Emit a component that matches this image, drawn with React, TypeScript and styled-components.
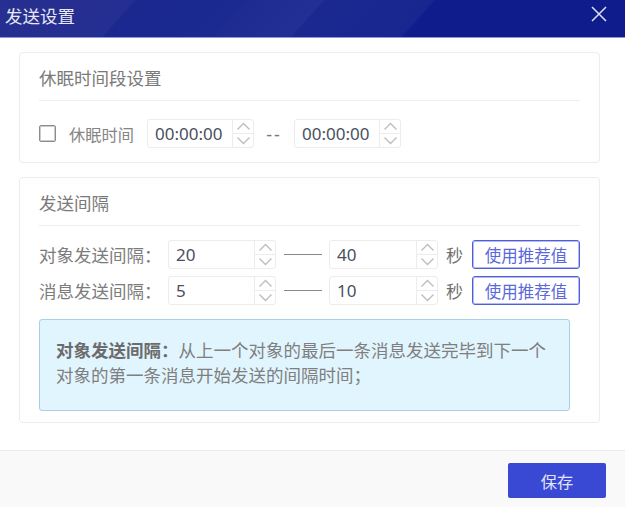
import React from 'react';
import styled, { createGlobalStyle } from 'styled-components';

const GlobalStyle = createGlobalStyle`
  html, body {
    margin: 0;
    padding: 0;
    background: #fff;
  }
  body {
    font-family: "Noto Sans", "Noto Sans CJK SC", sans-serif;
  }
`;

const Chevron: React.FC<{ up?: boolean }> = ({ up }) => (
  <svg width="15" height="9" viewBox="0 0 15 9" fill="none">
    <polyline
      points={up ? '1.5,7.5 7.5,1.5 13.5,7.5' : '1.5,1.5 7.5,7.5 13.5,1.5'}
      stroke="#bdbdbd"
      strokeWidth="1.4"
    />
  </svg>
);

const Spinner: React.FC<{ value: string; width: number }> = ({ value, width }) => (
  <SpinnerBox $width={width}>
    <SpinnerValue>{value}</SpinnerValue>
    <SpinnerSteps>
      <SpinnerStep><Chevron up /></SpinnerStep>
      <SpinnerStep><Chevron /></SpinnerStep>
    </SpinnerSteps>
  </SpinnerBox>
);

const intervals = [
  { label: '对象发送间隔：', from: '20', to: '40' },
  { label: '消息发送间隔：', from: '5', to: '10' },
];

const App: React.FC = () => {
  return (
    <>
      <GlobalStyle />
      <Dialog>
        <Header>
          <HeaderTitle>发送设置</HeaderTitle>
          <CloseIcon width="16" height="16" viewBox="0 0 16 16" fill="none">
            <path d="M1 1 L15 15 M15 1 L1 15" stroke="#dfe1f2" strokeWidth="1.5" />
          </CloseIcon>
        </Header>

        <Body>
          <Card>
            <CardTitle>休眠时间段设置</CardTitle>
            <SleepRow>
              <CheckBox />
              <SleepLabel>休眠时间</SleepLabel>
              <Spinner value="00:00:00" width={107} />
              <SleepDash>--</SleepDash>
              <Spinner value="00:00:00" width={107} />
            </SleepRow>
          </Card>

          <Card>
            <CardTitle>发送间隔</CardTitle>
            <IntervalRows>
              {intervals.map((item) => (
                <IntervalRow key={item.label}>
                  <RowLabel>{item.label}</RowLabel>
                  <Spinner value={item.from} width={108} />
                  <Dash />
                  <Spinner value={item.to} width={109} />
                  <Unit>秒</Unit>
                  <OutlineButton>使用推荐值</OutlineButton>
                </IntervalRow>
              ))}
            </IntervalRows>
            <InfoBox>
              <strong>对象发送间隔：</strong>从上一个对象的最后一条消息发送完毕到下一个对象的第一条消息开始发送的间隔时间；
            </InfoBox>
          </Card>
        </Body>

        <Footer>
          <SaveButton>保存</SaveButton>
        </Footer>
      </Dialog>
    </>
  );
};

const Dialog = styled.div`
  width: 625px;
  height: 507px;
  display: flex;
  flex-direction: column;
  overflow: hidden;
  background: #fff;
`;

const Header = styled.header`
  height: 37px;
  flex-shrink: 0;
  display: flex;
  align-items: center;
  justify-content: space-between;
  padding: 0 18px 0 5px;
  border-bottom: 1px solid #9196d2;
  background: linear-gradient(
    131.7deg,
    #272f90 0,
    #252f91 100px,
    #1a2890 102px,
    #1b2a90 183px,
    #1e2c92 185px,
    #222f94 241px,
    #1a2890 243px,
    #182690 323px,
    #0e1d8b 326px,
    #0e1d8b 100%
  );
`;

const HeaderTitle = styled.h1`
  margin: -6px 0 0;
  font-size: 17.5px;
  font-weight: 400;
  color: #e6e8f4;
`;

const CloseIcon = styled.svg`
  display: block;
  margin-top: -9px;
`;

const Body = styled.main`
  flex: 1;
  display: flex;
  flex-direction: column;
  gap: 14px;
  padding: 14px 25px 0 19px;
`;

const Card = styled.section`
  box-sizing: border-box;
  padding: 0 19px 11px;
  border: 1px solid #ececec;
  border-radius: 4px;
`;

const CardTitle = styled.h2`
  margin: 0;
  height: 48px;
  line-height: 50px;
  box-sizing: border-box;
  border-bottom: 1px solid #eeeeee;
  font-size: 17.5px;
  font-weight: 400;
  color: #7a7a7a;
`;

const SleepRow = styled.div`
  display: flex;
  align-items: center;
  margin: 18px 0 3px;
`;

const CheckBox = styled.span`
  box-sizing: border-box;
  width: 17px;
  height: 17px;
  border: 1px solid #8c8c8c;
  box-shadow: inset 0 0 0 1px rgba(140, 140, 140, 0.45);
  border-radius: 2px;
`;

const SleepLabel = styled.span`
  margin: 0 13px 0 13px;
  font-size: 16.25px;
  color: #858585;
`;

const SleepDash = styled.span`
  width: 40px;
  text-align: center;
  letter-spacing: 2px;
  font-size: 18px;
  color: #777;
`;

const SpinnerBox = styled.div<{ $width: number }>`
  box-sizing: border-box;
  width: ${(p) => p.$width}px;
  height: 29px;
  flex-shrink: 0;
  display: flex;
  border: 1px solid #ececec;
  border-radius: 3px;
  background: #fff;
`;

const SpinnerValue = styled.span`
  flex: 1;
  padding-left: 7px;
  line-height: 28px;
  font-family: "Noto Sans", sans-serif;
  font-size: 17px;
  color: #4a4f60;
`;

const SpinnerSteps = styled.div`
  width: 20px;
  display: flex;
  flex-direction: column;
  border-left: 1px solid #ececec;
`;

const SpinnerStep = styled.span`
  flex: 1;
  display: flex;
  align-items: center;
  justify-content: center;

  & + & {
    border-top: 1px solid #ececec;
  }
`;

const IntervalRows = styled.div`
  display: flex;
  flex-direction: column;
  gap: 7px;
  margin: 14px 0;
`;

const IntervalRow = styled.div`
  display: flex;
  align-items: center;
`;

const RowLabel = styled.span`
  width: 129px;
  flex-shrink: 0;
  font-size: 17.5px;
  white-space: nowrap;
  color: #7c7c7c;
`;

const Dash = styled.span`
  width: 38px;
  height: 1px;
  margin: 0 7px 0 8px;
  background: #8a8a8a;
`;

const Unit = styled.span`
  width: 18px;
  margin: 0 8px;
  font-size: 17px;
  color: #707070;
`;

const OutlineButton = styled.button`
  box-sizing: border-box;
  width: 108px;
  height: 29px;
  padding: 0;
  border: 1px solid #4f5edc;
  box-shadow: inset 0 0 0 1px rgba(90, 104, 224, 0.45);
  border-radius: 3px;
  background: #fff;
  font-family: inherit;
  font-size: 16.5px;
  color: #5a68dc;
`;

const InfoBox = styled.div`
  box-sizing: border-box;
  width: 531px;
  height: 92px;
  padding: 18px 20px 0 16px;
  border: 1px solid #a9cfe6;
  border-radius: 3px;
  background: #e1f5fe;
  font-size: 17.5px;
  line-height: 25px;
  color: #7f7f7f;

  strong {
    font-weight: 700;
    color: #6c6c6c;
  }
`;

const Footer = styled.footer`
  height: 57px;
  flex-shrink: 0;
  box-sizing: border-box;
  display: flex;
  justify-content: flex-end;
  align-items: flex-start;
  padding: 12px 19px 0 0;
  border-top: 1px solid #ebebeb;
  background: #f9f9f9;
`;

const SaveButton = styled.button`
  width: 98px;
  height: 35px;
  padding: 0;
  border: 0;
  border-radius: 2px;
  background: #3949d4;
  font-family: inherit;
  font-size: 16.25px;
  color: #e3e6fa;
`;

export default App;
